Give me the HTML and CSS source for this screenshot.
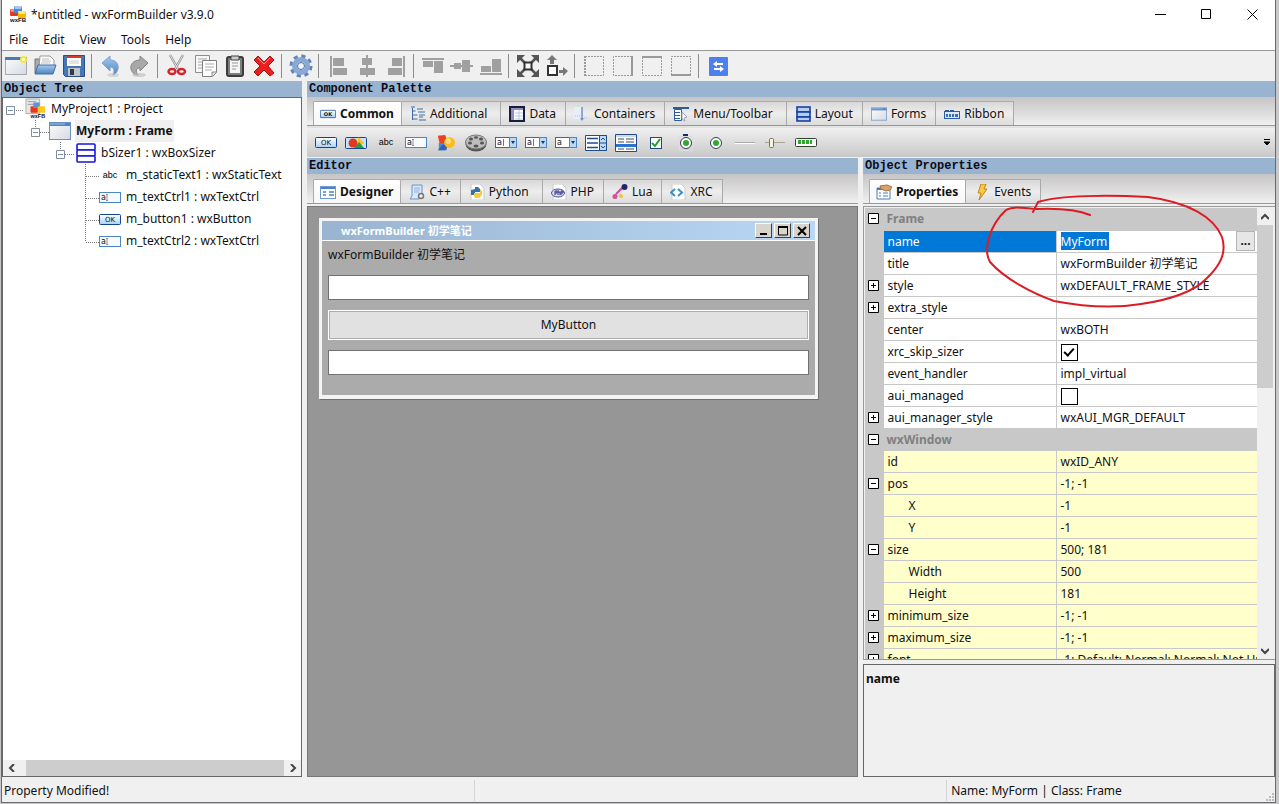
FILE: index.html
```html
<!DOCTYPE html>
<html lang="en">
<head>
<meta charset="utf-8">
<title>*untitled - wxFormBuilder v3.9.0</title>
<link rel="stylesheet" href="styles.css">
</head>
<body>
<svg class="defs" aria-hidden="true">
  <defs>
    <linearGradient id="gGray" x1="0" y1="0" x2="1" y2="1"><stop offset="0" stop-color="#fdfdfd"/><stop offset="1" stop-color="#d4dae2"/></linearGradient>
    <linearGradient id="gBlue" x1="0" y1="0" x2="0" y2="1"><stop offset="0" stop-color="#a9cbee"/><stop offset="1" stop-color="#4b84bd"/></linearGradient>
    <linearGradient id="gBtn" x1="0" y1="0" x2="0" y2="1"><stop offset="0" stop-color="#fff"/><stop offset="1" stop-color="#a9d2f5"/></linearGradient>
  </defs>
  <symbol id="logo" viewBox="0 0 18 18">
    <rect x="1" y="3" width="8" height="7" rx="1" fill="#e03a1e"/><path d="M1 3h8l-1 3H2z" fill="#f58a6c"/>
    <rect x="5" y="0" width="8" height="7" rx="1" fill="#4a86d8"/><path d="M5 0h8l-1 3H6z" fill="#a8c8f4"/>
    <rect x="9" y="5" width="8" height="7" rx="1" fill="#f5b800"/><path d="M9 5h8l-1 3h-6z" fill="#ffe680"/>
    <text x="9" y="16" font-size="6" font-weight="bold" text-anchor="middle" font-family="Liberation Sans" fill="#111">wxFB</text>
  </symbol>
  <symbol id="project" viewBox="0 0 24 24">
    <path d="M1 1h15v16H1z" fill="#e6e6e6" stroke="#aaa"/><path d="M3 4h9M3 7h6" stroke="#999"/>
    <rect x="6" y="9" width="8" height="7" rx="1" fill="#e8371e"/><rect x="9" y="5" width="7" height="6" rx="1" fill="#5a93e0"/><rect x="14" y="9" width="8" height="7" rx="1" fill="#fbc91c"/>
    <text x="14" y="22" font-size="6" font-weight="bold" text-anchor="middle" font-family="Liberation Sans" fill="#111">wxFB</text>
  </symbol>
  <symbol id="frame" viewBox="0 0 22 18"><rect x=".5" y=".5" width="21" height="17" fill="url(#gGray)" stroke="#6b91c4"/><path d="M1 1h20v3H1z" fill="#4d83c7"/><path d="M1 2h15" stroke="#9dc1ee"/></symbol>
  <symbol id="new" viewBox="0 0 24 24"><rect x="1.500" y="3.500" width="21" height="17" fill="url(#gGray)" stroke="#a5a8ad"/><path d="M1 3h22v3H1z" fill="#4879b8"/><circle cx="19.500" cy="5.500" r="3.500" fill="#f5e83c"/><circle cx="19.500" cy="5.500" r="1.500" fill="#fff"/></symbol>
  <symbol id="open" viewBox="0 0 24 24"><path d="M2 19V5h6l2 2h8v12z" fill="#a9a9a9" stroke="#777"/><path d="M7 2h10l4 4v8H6z" fill="#fff" stroke="#999"/><path d="M9 5h7M9 7h9M8 9h9" stroke="#bbb"/><path d="M5 11h18l-3 9H2z" fill="url(#gBlue)" stroke="#3f6fa5"/></symbol>
  <symbol id="save" viewBox="0 0 24 24"><path d="M1.500 1.500h21v21h-19l-2-2z" fill="#4678b8" stroke="#2b4f86"/><path d="M5 2h14v10H5z" fill="#fff"/><path d="M5 2h14v2H5z" fill="#e0352b"/><path d="M7 7h10M7 9h10" stroke="#c8c8c8"/><path d="M6 14h12v8H6z" fill="#bfc4ca"/><path d="M8 15h4v6H8z" fill="#2d3a50"/></symbol>
  <symbol id="undo" viewBox="0 0 24 24"><path d="M3 9l8-7v4c6 0 9 4 8 9-1 3-2 5-5 6 2-4 1-8-3-8v4z" fill="url(#gBlue)" stroke="#7ba4d0"/><ellipse cx="14" cy="21" rx="6" ry="2" fill="#bbb" opacity=".5"/></symbol>
  <symbol id="redo" viewBox="0 0 24 24"><path d="M20 9l-8-7v4C5 6 2 11 3 15c1 4 4 6 7 6-3-4-2-7 2-7v3z" fill="#a8a8a8" stroke="#858585"/><ellipse cx="11" cy="21" rx="7" ry="2" fill="#bbb" opacity=".6"/></symbol>
  <symbol id="cut" viewBox="0 0 24 24"><path d="M5 1l8 14M18 1l-8 14" stroke="#8c8c8c" stroke-width="2.400"/><path d="M5 1l8 14M18 1l-8 14" stroke="#e5e5e5"/><ellipse cx="7" cy="17.500" rx="3.500" ry="2.500" fill="none" stroke="#d8202a" stroke-width="2.400"/><ellipse cx="16.500" cy="17.500" rx="3.500" ry="2.500" fill="none" stroke="#d8202a" stroke-width="2.400"/></symbol>
  <symbol id="copy" viewBox="0 0 24 24"><path d="M1.500 1.500h14v17h-14z" fill="#f7f7f7" stroke="#8d8d8d"/><path d="M4 5h9M4 8h9M4 11h6M4 14h6" stroke="#aaa"/><path d="M8.500 6.500h14v12l-4 4h-10z" fill="#fff" stroke="#808080"/><path d="M11 10h9M11 13h9M11 16h7" stroke="#aaa"/><path d="M18 22v-4h4" fill="#ddd" stroke="#888"/></symbol>
  <symbol id="paste" viewBox="0 0 24 24"><rect x="4" y="3" width="16" height="19" rx="2" fill="#7e7e7e" stroke="#3c3c3c" stroke-width="2"/><path d="M7 6h10v13H7z" fill="#f4f4f4"/><path d="M8 2h8v4H8z" fill="#ccc" stroke="#444"/><path d="M9 9h6M9 12h6M9 15h4" stroke="#999"/></symbol>
  <symbol id="delete" viewBox="0 0 24 24"><path d="M6 2l6 6 6-6 4 4-6 6 6 7-4 3-6-6-6 6-4-4 6-6-6-6z" fill="#ea1f1f" stroke="#b20d0d"/><path d="M6 4l6 6 6-6" stroke="#ff9b8e" fill="none"/></symbol>
  <symbol id="gear" viewBox="0 0 24 24"><circle cx="12" cy="12" r="9.500" fill="none" stroke="#6384b8" stroke-width="4" stroke-dasharray="4 3.460"/><circle cx="12" cy="12" r="6.500" fill="none" stroke="#8aa8d6" stroke-width="5"/><circle cx="12" cy="12" r="3.500" fill="#eef3fa" stroke="#4a6ea4"/></symbol>
  <symbol id="al" viewBox="0 0 24 24"><path d="M4 2h2v21H4zM7 4h11v8H7zM7 14h14v7H7z" fill="#a0a0a0"/></symbol>
  <symbol id="ac" viewBox="0 0 24 24"><path d="M11 1h2v22h-2zM7 4h10v7H7zM5 14h15v7H5z" fill="#a0a0a0"/></symbol>
  <symbol id="ar" viewBox="0 0 24 24"><path d="M19 2h2v21h-2zM8 4h10v8H8zM4 14h14v7H4z" fill="#a0a0a0"/></symbol>
  <symbol id="at" viewBox="0 0 24 24"><path d="M1 4h22v2H1zM2 7h10v6H2zM13 7h9v12h-9z" fill="#a0a0a0"/></symbol>
  <symbol id="am" viewBox="0 0 24 24"><path d="M0 11h23v2H0zM4 9h7v6H4zM12 6h8v12h-8z" fill="#a0a0a0"/></symbol>
  <symbol id="ab" viewBox="0 0 24 24"><path d="M1 19h22v2H1zM2 12h10v6H2zM13 5h9v13h-9z" fill="#a0a0a0"/></symbol>
  <symbol id="expand" viewBox="0 0 24 24"><path d="M3 3l18 18M21 3L3 21" stroke="#555" stroke-width="2.500"/><path d="M1 1h8L1 9zM23 1v8l-8-8zM1 23v-8l8 8zM23 23h-8l8-8z" fill="#555"/><path d="M8.500 8.500h7v7h-7z" fill="#fff" stroke="#333" stroke-width="2"/></symbol>
  <symbol id="stretch" viewBox="0 0 24 24"><path d="M3 12h9v9H3z" fill="#fff" stroke="#333" stroke-width="2"/><path d="M7 1l5 5H9v4H5V6H2zM23 17l-5-4v3h-4v3h4v3z" fill="#777"/></symbol>
  <symbol id="bl" viewBox="0 0 24 24"><path d="M3 2.500h18.500v19H3" fill="none" stroke="#9a9a9a" stroke-dasharray="2 1"/><path d="M3 2v20" stroke="#9a9a9a" stroke-width="2" stroke-dasharray="2 1"/></symbol>
  <symbol id="br" viewBox="0 0 24 24"><path d="M21 2.500H2.500v19H21" fill="none" stroke="#9a9a9a" stroke-dasharray="2 1"/><path d="M21 2v20" stroke="#9a9a9a" stroke-width="2"/></symbol>
  <symbol id="bt" viewBox="0 0 24 24"><path d="M2.500 3v18.500h19V3" fill="none" stroke="#9a9a9a" stroke-dasharray="2 1"/><path d="M2 3h20" stroke="#9a9a9a" stroke-width="2"/></symbol>
  <symbol id="bb" viewBox="0 0 24 24"><path d="M2.500 21V2.500h19V21" fill="none" stroke="#9a9a9a" stroke-dasharray="2 1"/><path d="M2 21h20" stroke="#9a9a9a" stroke-width="2"/></symbol>
  <symbol id="swap" viewBox="0 0 24 24"><rect x="3" y="3" width="19" height="19" rx="1" fill="#4e7fee"/><path d="M11 7l-4 3 4 3v-2h6V9h-6zM14 12l4 3-4 3v-2H8v-2h6z" fill="#fff"/></symbol>
  <symbol id="ok" viewBox="0 0 22 11"><rect x=".5" y=".5" width="21" height="10" rx="1" fill="url(#gBtn)" stroke="#12458c"/><text x="11" y="8" font-size="7" text-anchor="middle" font-family="DejaVu Sans" fill="#111">OK</text></symbol>
  <symbol id="bmp" viewBox="0 0 22 14"><rect x=".5" y="1.500" width="21" height="11" rx="1" fill="#c8e2fa" stroke="#12458c"/><circle cx="8" cy="7" r="4.500" fill="#e23820"/><path d="M13 1l6 6-6 5z" fill="#f6c21c"/><path d="M14 6l5 6H9z" fill="#2f9a3a"/></symbol>
  <symbol id="abc" viewBox="0 0 22 11"><text x="11" y="8" font-size="9" text-anchor="middle" font-family="Liberation Sans" fill="#000">abc</text></symbol>
  <symbol id="txt" viewBox="0 0 22 11"><rect x=".5" y=".5" width="21" height="10" fill="#f7fbff" stroke="#4a86c8"/><text x="2" y="8" font-size="8" font-family="DejaVu Sans" fill="#111">a</text><path d="M7 2l1 1 1-1M8 3v5M7 9l1-1 1 1" fill="none" stroke="#777" stroke-width=".8"/></symbol>
  <symbol id="combo" viewBox="0 0 22 11"><rect x=".5" y=".5" width="21" height="10" fill="#fff" stroke="#2e6cb0"/><text x="2" y="8" font-size="8" font-family="DejaVu Sans" fill="#111">a</text><path d="M8.500 2v7" stroke="#777"/><path d="M14.500.500h7v10h-7z" fill="#b9d9f7" stroke="#4a86c8"/><path d="M16 4h4l-2 3z" fill="#235"/></symbol>
  <symbol id="choice" viewBox="0 0 22 11"><rect x=".5" y=".5" width="21" height="10" fill="#fff" stroke="#2e6cb0"/><text x="2" y="8" font-size="8" font-family="DejaVu Sans" fill="#111">a</text><path d="M14.500.500h7v10h-7z" fill="#b9d9f7" stroke="#4a86c8"/><path d="M16 4h4l-2 3z" fill="#235"/></symbol>
  <symbol id="shapes" viewBox="0 0 22 20"><path d="M2 2l8-1 3 8-9 2z" fill="#e9401f"/><path d="M3 10h9v8H3z" fill="#4f86d6"/><path d="M2 18l5-6h7l-4 6z" fill="#2f61b4"/><circle cx="15" cy="9.500" r="6" fill="#fbbc1d"/><circle cx="13.500" cy="8" r="3" fill="#ffe27a"/></symbol>
  <symbol id="reel" viewBox="0 0 22 18"><ellipse cx="11" cy="10" rx="10.500" ry="7.500" fill="#555"/><ellipse cx="11" cy="8" rx="10.500" ry="7" fill="#bdbdbd" stroke="#777"/><g fill="#555"><ellipse cx="6" cy="5" rx="2" ry="1.500"/><ellipse cx="11" cy="3.500" rx="2" ry="1.300"/><ellipse cx="16" cy="5" rx="2" ry="1.500"/><ellipse cx="5" cy="9" rx="2" ry="1.500"/><ellipse cx="17" cy="9" rx="2" ry="1.500"/><ellipse cx="11" cy="12" rx="2.500" ry="1.500"/></g></symbol>
  <symbol id="list" viewBox="0 0 22 16"><path d="M.5.500h21v15H.500z" fill="#fff" stroke="#214c8c"/><path d="M2 3.500h11M2 8h11M2 12.500h11" stroke="#214c8c" stroke-width="1.500"/><path d="M14.500.500h7v15h-7z" fill="#bcdaf5" stroke="#214c8c"/><path d="M15 8h6" stroke="#214c8c"/><path d="M16 5l2-2 2 2M16 11l2 2 2-2" fill="none" stroke="#214c8c"/></symbol>
  <symbol id="lctrl" viewBox="0 0 22 18"><path d="M.5.500h21v17H.500z" fill="#fff" stroke="#214c8c"/><path d="M1 2h20" stroke="#9bb"/><path d="M3 5h6M11 5h8M3 8h6M11 8h8M3 15h6M11 15h8" stroke="#446"/><path d="M1 10h20v3H1z" fill="#2b74d0"/></symbol>
  <symbol id="check" viewBox="0 0 22 16"><rect x="5.500" y="2.500" width="11" height="11" fill="#fff" stroke="#1e4a7c"/><path d="M7 8l3 3 5-7" fill="none" stroke="#27a027" stroke-width="2"/></symbol>
  <symbol id="radio" viewBox="0 0 22 18"><circle cx="11" cy="9" r="5.500" fill="#fff" stroke="#2f3d4d"/><circle cx="11" cy="9" r="3" fill="#2faa2f"/></symbol>
  <symbol id="radiobox" viewBox="0 0 22 18"><path d="M4.500 2.500h13v14h-13z" fill="none" stroke="#ddd"/><path d="M8 0h5v2H8z" fill="#1a2c66"/><circle cx="11" cy="9" r="5.500" fill="#fff" stroke="#2f3d4d"/><circle cx="11" cy="9" r="3" fill="#2faa2f"/></symbol>
  <symbol id="line" viewBox="0 0 22 18"><path d="M0 8.500h20" stroke="#aaa"/><path d="M0 9.500h20" stroke="#fff"/></symbol>
  <symbol id="slider" viewBox="0 0 22 18"><path d="M0 8.500h20" stroke="#a8a890"/><rect x="4.500" y="4.500" width="4" height="9" rx="1" fill="#f4f4dc" stroke="#777a48"/></symbol>
  <symbol id="gauge" viewBox="0 0 22 11"><rect x=".5" y="1.500" width="21" height="8" rx="1" fill="#fff" stroke="#31402f"/><path d="M3 3h3v4H3zM7 3h3v4H7zM11 3h3v4h-3zM15 3h2v4h-2z" fill="#2fa82f"/></symbol>
  <symbol id="treei" viewBox="0 0 16 16"><path d="M1 1h4M2.500 2v12M2.500 5h3M2.500 9h5M2.500 13h5M7 3h6M8 6h7M9 9h6M9 11h4M9 14h7" stroke="#3b6ea8" fill="none"/></symbol>
  <symbol id="datai" viewBox="0 0 16 16"><path d="M1 1h14v14H1z" fill="#fff" stroke="#1b1b3c" stroke-width="2"/><path d="M2 2h12v2H2zM2 2h3v12H2z" fill="#8d8fc4"/><path d="M6 7h8M6 10h8M6 13h8M10 4v10" stroke="#bcd"/></symbol>
  <symbol id="conti" viewBox="0 0 16 16"><path d="M0 1h8v12H0z" fill="#e6effa"/><path d="M8 1v13" stroke="#3568b0"/><path d="M6 12h4l-2 3z" fill="#7591be"/><path d="M1 10h5M10 12h4" stroke="#a9bfdf" stroke-dasharray="1 1"/></symbol>
  <symbol id="menui" viewBox="0 0 16 16"><path d="M0 1h16v2H0z" fill="#2b5b9e"/><path d="M1.500 3.500h7v11h-7z" fill="#fff" stroke="#2b5b9e"/><path d="M2 6.500h5M2 9.500h5M2 12.500h5" stroke="#2b5b9e"/><path d="M9 6l5 5-3 1 1 3-2-1-1-2z" fill="#fff" stroke="#9aa3c0"/></symbol>
  <symbol id="box" viewBox="0 0 20 20"><g fill="#fff" stroke="#1414e0" stroke-width="1.600"><rect x="1" y="1" width="18" height="6" rx="1"/><rect x="1" y="7" width="18" height="6" rx="1"/><rect x="1" y="13" width="18" height="6" rx="1"/></g></symbol>
  <symbol id="layi" viewBox="0 0 16 16"><g fill="#b7cdf0" stroke="#1741a0" stroke-width="1.600"><rect x="2" y="1" width="13" height="5"/><rect x="2" y="6" width="13" height="5"/><rect x="2" y="11" width="13" height="4"/></g></symbol>
  <symbol id="ribi" viewBox="0 0 16 12"><path d="M1 2h4v2H1zM6 2h4v2H6z" fill="#2c5c9e"/><rect x=".5" y="3.500" width="15" height="7" fill="#dbe8f7" stroke="#2c5c9e"/><path d="M2 6h2v3H2zM5 6h2v3H5zM8 6h2v3H8zM11 6h3v3h-3z" fill="#3c6cb0"/></symbol>
  <symbol id="desi" viewBox="0 0 16 16"><rect x=".5" y="2.500" width="15" height="12" fill="#fff" stroke="#6e9ad0"/><path d="M1 3h14v2H1z" fill="#4b82c8"/><path d="M3 8h3M3 11h3M9 8h5M9 11h5" stroke="#4b82c8" stroke-width="1.500"/></symbol>
  <symbol id="cpp" viewBox="0 0 16 16"><path d="M3 1h10v10l-3 4H1l2-3z" fill="#d9e8fb" stroke="#6a94c8"/><path d="M5 4h6M5 6h6M5 8h5" stroke="#8fb4e0"/><circle cx="12" cy="12" r="2.500" fill="#eee" stroke="#777" stroke-width="1.500"/></symbol>
  <symbol id="py" viewBox="0 0 16 16"><path d="M2 0h9l4 4v12H2z" fill="#fff" stroke="#ccc"/><path d="M6 3h3l2 2v3H6v3H2V6l4-1z" fill="#3a72a8"/><path d="M11 5l2 2v4l-3 3H6l-1-2V9h6z" fill="#f8cb3b"/></symbol>
  <symbol id="php" viewBox="0 0 16 16"><path d="M2 0h9l4 4v12H2z" fill="#fff" stroke="#ccc"/><ellipse cx="7" cy="9" rx="6.500" ry="4" fill="#dcdcf4" stroke="#4a4f9c"/><path d="M4 11V7h2v2H4M7 6v5M7 8h2v3M10 11V7h2v2h-2" fill="none" stroke="#33377c"/></symbol>
  <symbol id="lua" viewBox="0 0 16 16"><path d="M3 13L12 3" stroke="#d8d8e8" stroke-width="4"/><path d="M4 10l6-6" stroke="#c04fa0" stroke-width="2"/><circle cx="12.500" cy="3" r="3" fill="#23236e"/><circle cx="3" cy="12.500" r="2.500" fill="#d84f9c"/><circle cx="9" cy="12" r="2" fill="#f2c52b"/></symbol>
  <symbol id="xrc" viewBox="0 0 16 16"><path d="M2 0h9l4 4v12H2z" fill="#fff" stroke="#ccc"/><path d="M5 5L1 8.500 5 12M8 5l4 3.500L8 12" fill="none" stroke="#3d8fc8" stroke-width="2"/></symbol>
  <symbol id="prop" viewBox="0 0 16 16"><path d="M1 4h13v11H1z" fill="#fff" stroke="#4a7db5"/><path d="M1 5h13" stroke="#4a7db5" stroke-width="2"/><path d="M3 9h2M3 12h2M7 9h5M7 12h5" stroke="#4a7db5"/><path d="M4 2l7-1 5 2-2 3-4 1-5-2z" fill="#dba36a" stroke="#a8713c"/></symbol>
  <symbol id="bolt" viewBox="0 0 16 16"><path d="M7 0h5l-2 5h3L5 16l2-7H4z" fill="#fbc840" stroke="#c08518"/></symbol>
  <symbol id="minus" viewBox="0 0 11 11"><path d="M.5.500h10v10H.500zM3 5.500h5" fill="#fff" stroke="#000"/></symbol>
  <symbol id="plus" viewBox="0 0 11 11"><path d="M.5.500h10v10H.500zM3 5.500h5M5.500 3v5" fill="#fff" stroke="#000"/></symbol>
</svg>

<div class="window">
  <header class="titlebar">
    <svg class="logo"><use href="#logo"/></svg>
    <span class="app-title">*untitled - wxFormBuilder v3.9.0</span>
    <button class="win-btn" aria-label="Minimize"><svg viewBox="0 0 11 11"><path d="M0 5.500h11" stroke="#000"/></svg></button>
    <button class="win-btn" aria-label="Maximize"><svg viewBox="0 0 11 11"><path d="M.5.500h9v9H.500z" fill="none" stroke="#000"/></svg></button>
    <button class="win-btn" aria-label="Close"><svg viewBox="0 0 11 11"><path d="M.5.500l10 10M10.500.500l-10 10" stroke="#000"/></svg></button>
  </header>
  <nav class="menubar"><button>File</button><button>Edit</button><button>View</button><button>Tools</button><button>Help</button></nav>
  <div class="toolbar">
    <button aria-label="New"><svg><use href="#new"/></svg></button><button aria-label="Open"><svg><use href="#open"/></svg></button><button aria-label="Save"><svg><use href="#save"/></svg></button><i></i>
    <button aria-label="Undo"><svg><use href="#undo"/></svg></button><button aria-label="Redo"><svg><use href="#redo"/></svg></button><i></i>
    <button aria-label="Cut"><svg><use href="#cut"/></svg></button><button aria-label="Copy"><svg><use href="#copy"/></svg></button><button aria-label="Paste"><svg><use href="#paste"/></svg></button><button aria-label="Delete"><svg><use href="#delete"/></svg></button><i></i>
    <button aria-label="Generate code"><svg><use href="#gear"/></svg></button><i></i>
    <button aria-label="Align left"><svg><use href="#al"/></svg></button><button aria-label="Align center"><svg><use href="#ac"/></svg></button><button aria-label="Align right"><svg><use href="#ar"/></svg></button><i></i>
    <button aria-label="Align top"><svg><use href="#at"/></svg></button><button aria-label="Align middle"><svg><use href="#am"/></svg></button><button aria-label="Align bottom"><svg><use href="#ab"/></svg></button><i></i>
    <button aria-label="Expand"><svg><use href="#expand"/></svg></button><button aria-label="Stretch"><svg><use href="#stretch"/></svg></button><i></i>
    <button aria-label="Left border"><svg><use href="#bl"/></svg></button><button aria-label="Right border"><svg><use href="#br"/></svg></button><button aria-label="Top border"><svg><use href="#bt"/></svg></button><button aria-label="Bottom border"><svg><use href="#bb"/></svg></button><i></i>
    <button aria-label="Swap"><svg><use href="#swap"/></svg></button>
  </div>

  <main class="workspace">
    <section class="tree-panel">
      <h2 class="caption">Object Tree</h2>
      <div class="tree-box">
        <ul class="tree">
          <li><svg class="branch b1"><path class="dots" d="M13 12.500h8"/><path class="tog" d="M3.500 8.500h8v8h-8zM5 12.500h5"/></svg><svg class="node"><use href="#project"/></svg><span>MyProject1 : Project</span></li>
          <li><svg class="branch b2"><path class="dots" d="M32.500 0v8M37 12.500h9"/><path class="tog" d="M28.500 8.500h8v8h-8zM30 12.500h5"/></svg><svg class="node form-node"><use href="#frame"/></svg><span class="selected">MyForm : Frame</span></li>
          <li><svg class="branch b3"><path class="dots" d="M57.500 0v8M62 12.500h9"/><path class="tog" d="M53.500 8.500h8v8h-8zM55 12.500h5"/></svg><svg class="node sizer-node"><use href="#box"/></svg><span>bSizer1 : wxBoxSizer</span></li>
          <li><svg class="branch b4"><path class="dots" d="M82.500 0v22M83 12.500h13"/></svg><svg class="node leaf"><use href="#abc"/></svg><span>m_staticText1 : wxStaticText</span></li>
          <li><svg class="branch b4"><path class="dots" d="M82.500 0v22M83 12.500h13"/></svg><svg class="node leaf"><use href="#txt"/></svg><span>m_textCtrl1 : wxTextCtrl</span></li>
          <li><svg class="branch b4"><path class="dots" d="M82.500 0v22M83 12.500h13"/></svg><svg class="node leaf"><use href="#ok"/></svg><span>m_button1 : wxButton</span></li>
          <li><svg class="branch b4"><path class="dots" d="M82.500 0v12M83 12.500h13"/></svg><svg class="node leaf"><use href="#txt"/></svg><span>m_textCtrl2 : wxTextCtrl</span></li>
        </ul>
        <div class="hscroll">
          <button aria-label="Scroll left"><svg viewBox="0 0 8 8"><path d="M6 0L2 4l4 4"/></svg></button><b></b><button aria-label="Scroll right"><svg viewBox="0 0 8 8"><path d="M2 0l4 4-4 4"/></svg></button>
        </div>
      </div>
    </section>

    <div class="right">
      <section class="palette">
        <h2 class="caption">Component Palette</h2>
        <div class="tabs">
          <button class="tab active"><svg><use href="#ok"/></svg>Common</button>
          <button class="tab wide"><svg><use href="#treei"/></svg>Additional</button>
          <button class="tab"><svg><use href="#datai"/></svg>Data</button>
          <button class="tab"><svg><use href="#conti"/></svg>Containers</button>
          <button class="tab wide"><svg><use href="#menui"/></svg>Menu/Toolbar</button>
          <button class="tab"><svg><use href="#layi"/></svg>Layout</button>
          <button class="tab"><svg><use href="#frame"/></svg>Forms</button>
          <button class="tab"><svg><use href="#ribi"/></svg>Ribbon</button>
        </div>
        <div class="components">
          <button aria-label="Button"><svg class="h11"><use href="#ok"/></svg></button><button aria-label="Bitmap button"><svg class="h14"><use href="#bmp"/></svg></button><button aria-label="Static text"><svg class="h11"><use href="#abc"/></svg></button><button aria-label="Text control"><svg class="h11"><use href="#txt"/></svg></button><button aria-label="Static bitmap"><svg><use href="#shapes"/></svg></button><button aria-label="Animation"><svg><use href="#reel"/></svg></button><button aria-label="Combo box"><svg class="h11"><use href="#combo"/></svg></button><button aria-label="Bitmap combo box"><svg class="h11"><use href="#combo"/></svg></button><button aria-label="Choice"><svg class="h11"><use href="#choice"/></svg></button><button aria-label="List box"><svg><use href="#list"/></svg></button><button aria-label="List control"><svg><use href="#lctrl"/></svg></button><button aria-label="Check box"><svg><use href="#check"/></svg></button><button aria-label="Radio box"><svg><use href="#radiobox"/></svg></button><button aria-label="Radio button"><svg><use href="#radio"/></svg></button><button aria-label="Static line"><svg><use href="#line"/></svg></button><button aria-label="Slider"><svg><use href="#slider"/></svg></button><button aria-label="Gauge"><svg class="h11"><use href="#gauge"/></svg></button>
          <button class="more" aria-label="More"><svg viewBox="0 0 8 8"><path d="M1 .500h6M1 3h6L4 6z" fill="#000" stroke="#000"/></svg></button>
        </div>
      </section>

      <div class="lower">
        <section class="editor">
          <h2 class="caption">Editor</h2>
          <div class="tabs">
            <button class="tab active"><svg><use href="#desi"/></svg>Designer</button>
            <button class="tab"><svg><use href="#cpp"/></svg>C++</button>
            <button class="tab wide"><svg><use href="#py"/></svg>Python</button>
            <button class="tab"><svg><use href="#php"/></svg>PHP</button>
            <button class="tab"><svg><use href="#lua"/></svg>Lua</button>
            <button class="tab"><svg><use href="#xrc"/></svg>XRC</button>
          </div>
          <div class="canvas">
            <form class="form">
              <div class="form-title"><span>wxFormBuilder 初学笔记</span>
                <button type="button" aria-label="Minimize"><svg viewBox="0 0 12 10"><path d="M2 8h7" stroke="#000" stroke-width="2"/></svg></button>
                <button type="button" aria-label="Maximize"><svg viewBox="0 0 12 10"><path d="M1.500 1v8h9V1" fill="none" stroke="#000"/><path d="M1 1h10" stroke="#000" stroke-width="2"/></svg></button>
                <button type="button" aria-label="Close"><svg viewBox="0 0 12 10"><path d="M2 1l8 8M10 1L2 9" stroke="#000" stroke-width="2"/></svg></button>
              </div>
              <div class="form-body">
                <label for="ctrl1">wxFormBuilder 初学笔记</label>
                <input id="ctrl1" type="text">
                <button type="button">MyButton</button>
                <input aria-label="m_textCtrl2" type="text">
              </div>
            </form>
          </div>
        </section>

        <section class="props">
          <h2 class="caption">Object Properties</h2>
          <div class="tabs">
            <button class="tab active"><svg><use href="#prop"/></svg>Properties</button>
            <button class="tab"><svg><use href="#bolt"/></svg>Events</button>
          </div>
          <div class="grid">
            <div class="grid-view">
            <table>
              <colgroup><col class="c-gut"><col class="c-name"><col></colgroup>
              <tbody>
              <tr class="cat"><td><svg><use href="#minus"/></svg></td><th colspan="2">Frame</th></tr>
              <tr class="current"><td></td><th>name</th><td><div class="edit"><input type="text" aria-label="name" value="MyForm"><button>...</button></div></td></tr>
              <tr><td></td><th>title</th><td>wxFormBuilder 初学笔记</td></tr>
              <tr><td><svg><use href="#plus"/></svg></td><th>style</th><td>wxDEFAULT_FRAME_STYLE</td></tr>
              <tr><td><svg><use href="#plus"/></svg></td><th>extra_style</th><td></td></tr>
              <tr><td></td><th>center</th><td>wxBOTH</td></tr>
              <tr><td></td><th>xrc_skip_sizer</th><td><input type="checkbox" aria-label="xrc_skip_sizer" checked></td></tr>
              <tr><td></td><th>event_handler</th><td>impl_virtual</td></tr>
              <tr><td></td><th>aui_managed</th><td><input type="checkbox" aria-label="aui_managed"></td></tr>
              <tr><td><svg><use href="#plus"/></svg></td><th>aui_manager_style</th><td>wxAUI_MGR_DEFAULT</td></tr>
              <tr class="cat"><td><svg><use href="#minus"/></svg></td><th colspan="2">wxWindow</th></tr>
              </tbody>
              <tbody class="inherited">
              <tr><td></td><th>id</th><td>wxID_ANY</td></tr>
              <tr><td><svg><use href="#minus"/></svg></td><th>pos</th><td>-1; -1</td></tr>
              <tr class="sub"><td></td><th>X</th><td>-1</td></tr>
              <tr class="sub"><td></td><th>Y</th><td>-1</td></tr>
              <tr><td><svg><use href="#minus"/></svg></td><th>size</th><td>500; 181</td></tr>
              <tr class="sub"><td></td><th>Width</th><td>500</td></tr>
              <tr class="sub"><td></td><th>Height</th><td>181</td></tr>
              <tr><td><svg><use href="#plus"/></svg></td><th>minimum_size</th><td>-1; -1</td></tr>
              <tr><td><svg><use href="#plus"/></svg></td><th>maximum_size</th><td>-1; -1</td></tr>
              <tr><td><svg><use href="#plus"/></svg></td><th>font</th><td>-1; Default; Normal; Normal; Not Underlined</td></tr>
              </tbody>
            </table>
            </div>
            <div class="vscroll">
              <button aria-label="Scroll up"><svg viewBox="0 0 8 8"><path d="M0 6l4-4 4 4"/></svg></button><b></b><button aria-label="Scroll down"><svg viewBox="0 0 8 8"><path d="M0 2l4 4 4-4"/></svg></button>
            </div>
          </div>
          <div class="help">name</div>
          <svg class="scribble" viewBox="980 190 250 122" aria-hidden="true"><path d="M1033 212L1038 202C1060 195 1110 195 1148 197C1188 202 1214 217 1222 237C1227 253 1220 266 1206 279C1195 291 1170 300 1141 304C1110 309 1080 306 1054 301C1032 293 1005 279 990 262C983 250 989 226 1006 210C1012 206 1022 208 1036 209C1060 208 1078 210 1090 215"/></svg>
        </section>
      </div>
    </div>
  </main>
  <footer class="status"><span>Property Modified!</span><span></span><span>Name: MyForm | Class: Frame</span><svg class="grip" viewBox="0 0 10 10"><path d="M7 1h2v2H7zM4 4h2v2H4zM7 4h2v2H7zM1 7h2v2H1zM4 7h2v2H4zM7 7h2v2H7z" fill="#bbb"/></svg></footer>
</div>
</body>
</html>
```
FILE: styles.css
```css
* { box-sizing: border-box; }
html, body { height: 100%; margin: 0; }
body {
  display: flex;
  padding: 0 3px 1px 1px;
  background: #c8c8cb;
  font: 12px/22px "Noto Sans", "Noto Sans CJK SC", sans-serif;
  color: #111;
  overflow: hidden;
}
button { font: inherit; color: inherit; padding: 0; border: 0; background: none; }
ul, h2 { margin: 0; padding: 0; list-style: none; }
svg { display: block; flex: none; }
.defs { position: absolute; width: 0; height: 0; }

.window {
  flex: 1;
  min-width: 0;
  display: flex;
  flex-direction: column;
  background: #f0f0f0;
  border: solid #6a6a6a;
  border-width: 0 1px 1px;
}

.titlebar { display: flex; align-items: center; height: 29px; padding-left: 7px; background: #fff; }
.logo { width: 18px; height: 18px; margin-right: 4px; }
.app-title { flex: 1; }
.win-btn { display: grid; place-items: center; width: 46px; height: 29px; }
.win-btn svg { width: 11px; height: 11px; }
.menubar { display: flex; gap: 15px; height: 22px; padding-left: 7px; background: #fff; border-bottom: 1px solid #999; line-height: 21px; }

.toolbar { display: flex; align-items: center; gap: 5px; height: 30px; padding-left: 2px; }
.toolbar svg { width: 24px; height: 24px; }
.toolbar i { width: 1px; height: 24px; margin-right: 2px; background: #8c8c8c; }

.workspace { flex: 1; min-height: 0; display: flex; gap: 5px; padding-bottom: 2px; }
.caption { flex: none; height: 16px; padding-left: 2px; background: #99b4d1; font: bold 12px/16px "Liberation Mono", monospace; color: #0c0c18; }

.tree-panel { flex: none; width: 300px; display: flex; flex-direction: column; }
.tree-box { flex: 1; display: flex; flex-direction: column; justify-content: space-between; background: #fff; border: 1px solid #666; }
.tree li { display: flex; align-items: center; height: 22px; white-space: pre; }
.branch { height: 22px; }
.b1 { width: 21px; }
.b2 { width: 46px; }
.b3 { width: 73px; }
.b4 { width: 96px; }
.dots { fill: none; stroke: #777; stroke-dasharray: 1 1; }
.tog { fill: #fff; stroke: #7d8ca0; }
.node { width: 24px; height: 22px; margin-right: 3px; }
.form-node { width: 22px; height: 18px; margin-right: 4px; }
.sizer-node { width: 20px; height: 20px; margin-right: 5px; }
.leaf { width: 22px; height: 11px; margin-right: 5px; }
.selected { padding: 0 1px; background: #f0f0f0; font-weight: bold; }
.hscroll { display: flex; height: 16px; background: #f0f0f0; }
.hscroll button { display: grid; place-items: center; width: 17px; }
.hscroll b { flex: 1; margin: 0 0 0 6px; background: #cdcdcd; }
.hscroll svg, .vscroll svg { width: 8px; height: 8px; fill: none; stroke: #444; stroke-width: 2; }

.right { flex: 1; min-width: 0; display: flex; flex-direction: column; gap: 1px; }
.tabs { flex: none; display: flex; align-items: flex-end; height: 29px; padding: 0 6px; background: linear-gradient(#c6c4c4, #f0f0f0); border-bottom: 1px solid #999; }
.tab {
  display: flex;
  align-items: center;
  gap: 4px;
  height: 24px;
  padding: 0 9px 0 8px;
  border: solid #aaa;
  border-width: 1px 1px 0 0;
  background: linear-gradient(#d8d8d8, #ededed 50%, #dcdcdc);
  white-space: nowrap;
}
.tab.wide { padding-right: 13px; }
.tab.active { padding: 0 7px 0 6px; background: linear-gradient(#fff, #f7f7f7); border-left-width: 1px; border-radius: 2px 2px 0 0; font-weight: bold; }
.tab svg { width: 16px; height: 16px; }
.components { display: flex; align-items: center; gap: 8px; height: 31px; padding-left: 8px; background: linear-gradient(#f0f0f0, #c9c8c8); border-top: 2px solid #e2e2e2; }
.components button { display: grid; place-items: center; }
.components svg { width: 22px; height: 18px; }
.components .h11 { height: 11px; }
.components .h14 { height: 14px; }
.components .more { margin-left: auto; padding-right: 4px; }
.components .more svg { width: 8px; height: 8px; }

.lower { flex: 1; min-height: 0; display: flex; gap: 5px; }
.editor { flex: 1; min-width: 0; display: flex; flex-direction: column; }
.editor .tabs, .props .tabs { height: 30px; }
.canvas { flex: 1; margin-top: 2px; padding: 11px; background: #969696; border: 1px solid #777; }
.form { max-width: 499px; border: 2px solid #f4f4f4; border-width: 3px 3px 4px; background: #ababab; box-shadow: 1px 1px #707070; }
.form-title { display: flex; align-items: center; gap: 2px; height: 20px; padding: 0 5px 0 19px; background: linear-gradient(90deg, #99b4d1, #b9d8f4); border-bottom: 1px solid #fff; color: #fff; font-size: 11px; font-weight: bold; }
.form-title span { flex: 1; }
.form-title button { display: grid; place-items: center; width: 17px; height: 15px; background: #d8d4cc; border: 1px solid; border-color: #fff #404040 #404040 #fff; }
.form-title svg { width: 12px; height: 10px; }
.form-body { display: flex; flex-direction: column; gap: 10px; padding: 4px 6px 20px; }
.form-body label { line-height: 20px; }
.form-body input { height: 25px; width: 100%; border: 1px solid #707070; background: #fff; }
.form-body button { height: 30px; background: #e1e1e1; border: 1px solid #fff; outline: 1px solid #adadad; outline-offset: -2px; }

.props { position: relative; flex: none; width: 412px; display: flex; flex-direction: column; }
.grid { flex: 1; min-height: 0; display: flex; margin-top: 2px; padding: 1px 2px 0 1px; border: 1px solid #999; border-width: 1px 0 1px 1px; }
.grid-view { flex: 1; min-width: 0; overflow: hidden; background: #c8c8c8; }
table { width: 100%; table-layout: fixed; border-collapse: collapse; background: #fff; }
.c-gut { width: 18px; }
.c-name { width: 173px; }
tr { height: 22px; }
td, th { padding: 0 4px; height: 22px; line-height: 21px; text-align: left; font-weight: normal; white-space: nowrap; overflow: hidden; border-bottom: 1px solid #c8c8c8; border-right: 1px solid #c8c8c8; }
td:last-child, .cat th { border-right: 0; }
td:first-child { padding: 0 3px; background: #c8c8c8; }
td svg { width: 11px; height: 11px; }
.cat th { background: #c8c8c8; color: #808080; font-weight: bold; padding-left: 3px; }
.inherited { background: #ffffcc; }
.sub th { padding-left: 25px; }
.current th { background: #0078d7; color: #fff; }
.current td:last-child { padding-right: 2px; }
.edit { display: flex; justify-content: space-between; align-items: center; }
.edit input { width: 48px; height: 18px; padding: 0; border: 0; background: #0078d7; color: #fff; font: inherit; }
.edit button { width: 19px; height: 20px; line-height: 14px; background: #e6e6e6; border: 1px solid #b4b4b4; font-weight: bold; }
input[type="checkbox"] { appearance: none; display: grid; place-items: center; width: 17px; height: 17px; margin: 2px 0 0; border: 1px solid #000; background: #fff; }
input[type="checkbox"]:checked::after { content: ""; width: 4px; height: 8px; margin-bottom: 2px; border: solid #000; border-width: 0 2px 2px 0; transform: rotate(42deg); }
.vscroll { display: flex; flex-direction: column; width: 16px; background: #f0f0f0; }
.vscroll button { display: grid; place-items: center; height: 17px; }
.vscroll b { height: 163px; margin-bottom: auto; background: #cdcdcd; }
.help { flex: none; height: 113px; margin-top: 4px; padding: 3px 2px; border: 1px solid #666; font-weight: bold; }
.scribble { position: absolute; left: 117px; top: 32px; width: 250px; height: 122px; fill: none; stroke: #dc1c24; stroke-width: 2; stroke-linecap: round; pointer-events: none; }

.status { display: grid; grid-template-columns: 472fr 473fr 329fr; align-items: center; height: 23px; position: relative; }
.status span { padding-left: 4px; height: 21px; line-height: 22px; border-left: 1px solid #d4d4d4; }
.status span:first-child { border: 0; padding-left: 2px; }
.grip { position: absolute; right: 0; bottom: 0; width: 10px; height: 10px; }
```
